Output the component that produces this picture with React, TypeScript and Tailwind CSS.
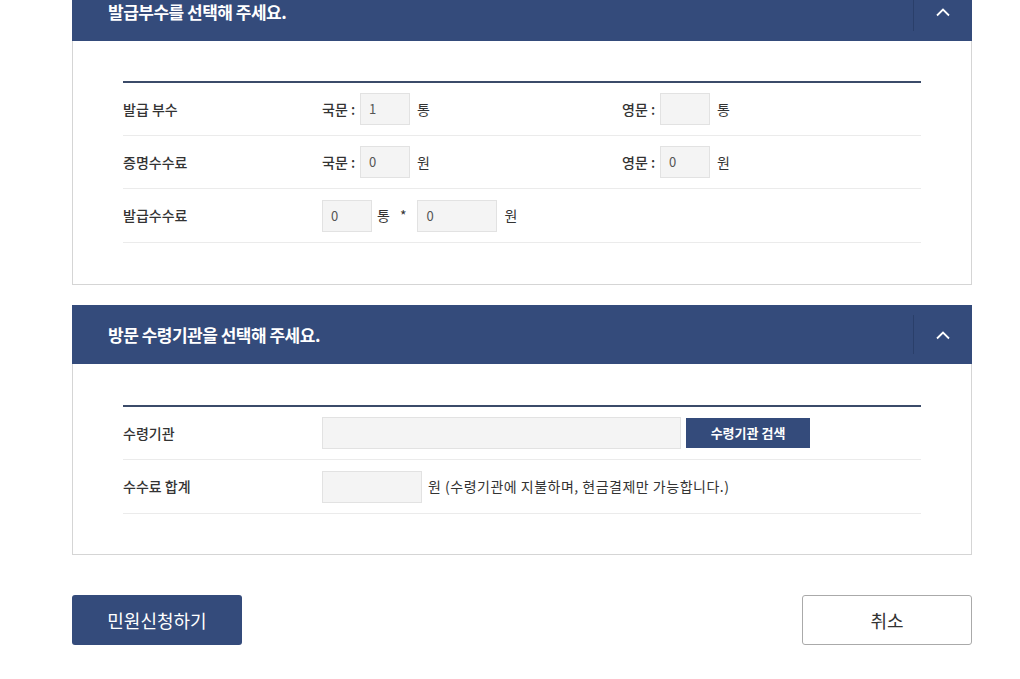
import React from "react";

const font = { fontFamily: '"Noto Sans CJK KR", "Noto Sans", sans-serif' };

function Chevron() {
  return (
    <svg width="16" height="10" viewBox="0 0 16 10" fill="none">
      <path d="M2 8.5 L8 2.5 L14 8.5" stroke="white" strokeWidth="1.8" />
    </svg>
  );
}

function Header({ title }: { title: string }) {
  return (
    <div className="flex h-[59px] items-center bg-[#344b7b] pl-[36px]">
      <div className="flex-1 text-[17px] font-bold tracking-[-0.5px] text-white">{title}</div>
      <div className="flex h-[39px] w-[59px] items-center justify-center border-l border-[#2a3f6a]">
        <Chevron />
      </div>
    </div>
  );
}

function Box({ value, w }: { value?: string; w: string }) {
  return (
    <div className={`flex h-[32px] ${w} items-center border border-[#e2e2e2] bg-[#f4f4f4] pl-[8px] text-[13px] text-[#555]`}>
      {value}
    </div>
  );
}

function Row({ label, children, h }: { label: string; children: React.ReactNode; h?: string }) {
  return (
    <div className={`flex ${h ?? "h-[53px]"} items-center border-b border-[#ebebeb]`}>
      <div className="w-[199px] text-[14px] font-medium text-[#333]">{label}</div>
      <div className="flex flex-1 items-center text-[14px] text-[#333]">{children}</div>
    </div>
  );
}

export default function App() {
  return (
    <div className="min-h-[679px] bg-white" style={font}>
      <div className="mx-[72px] -mt-[18px] w-[900px]">
        <Header title="발급부수를 선택해 주세요." />
        <div className="border border-t-0 border-[#d5d5d5] px-[50px] pt-[40px] pb-[41px]">
          <div className="border-t-2 border-[#3b4b69]">
            <Row label="발급 부수">
              <div className="flex w-[300px] items-center">
                <span className="mr-[5px] font-medium">국문 :</span>
                <Box value="1" w="w-[50px]" />
                <span className="ml-[7px]">통</span>
              </div>
              <div className="flex items-center">
                <span className="mr-[5px] font-medium">영문 :</span>
                <Box w="w-[50px]" />
                <span className="ml-[7px]">통</span>
              </div>
            </Row>
            <Row label="증명수수료">
              <div className="flex w-[300px] items-center">
                <span className="mr-[5px] font-medium">국문 :</span>
                <Box value="0" w="w-[50px]" />
                <span className="ml-[7px]">원</span>
              </div>
              <div className="flex items-center">
                <span className="mr-[5px] font-medium">영문 :</span>
                <Box value="0" w="w-[50px]" />
                <span className="ml-[7px]">원</span>
              </div>
            </Row>
            <Row label="발급수수료" h="h-[54px]">
              <div className="flex items-center">
                <Box value="0" w="w-[50px]" />
                <span className="ml-[5px]">통</span>
                <span className="ml-[10px]">*</span>
                <div className="ml-[11px]">
                  <Box value="0" w="w-[80px]" />
                </div>
                <span className="ml-[7px]">원</span>
              </div>
            </Row>
          </div>
        </div>

        <div className="mt-[20px]">
          <Header title="방문 수령기관을 선택해 주세요." />
          <div className="border border-t-0 border-[#d5d5d5] px-[50px] pt-[41px] pb-[40px]">
            <div className="border-t-2 border-[#3b4b69]">
              <Row label="수령기관">
                <div className="flex items-center">
                  <Box w="w-[359px]" />
                  <button className="ml-[5px] h-[30px] w-[124px] bg-[#344b7b] text-[13px] font-bold text-white">
                    수령기관 검색
                  </button>
                </div>
              </Row>
              <Row label="수수료 합계" h="h-[54px]">
                <div className="flex items-center">
                  <Box w="w-[100px]" />
                  <span className="ml-[6px] tracking-[0.5px]">원 (수령기관에 지불하며, 현금결제만 가능합니다.)</span>
                </div>
              </Row>
            </div>
          </div>
        </div>

        <div className="mt-[40px] flex justify-between">
          <button className="h-[50px] w-[170px] rounded-[3px] bg-[#344b7b] text-[18px] text-white">민원신청하기</button>
          <button className="h-[50px] w-[170px] rounded-[3px] border border-[#aaa] bg-white text-[18px] text-[#333]">취소</button>
        </div>
      </div>
    </div>
  );
}
